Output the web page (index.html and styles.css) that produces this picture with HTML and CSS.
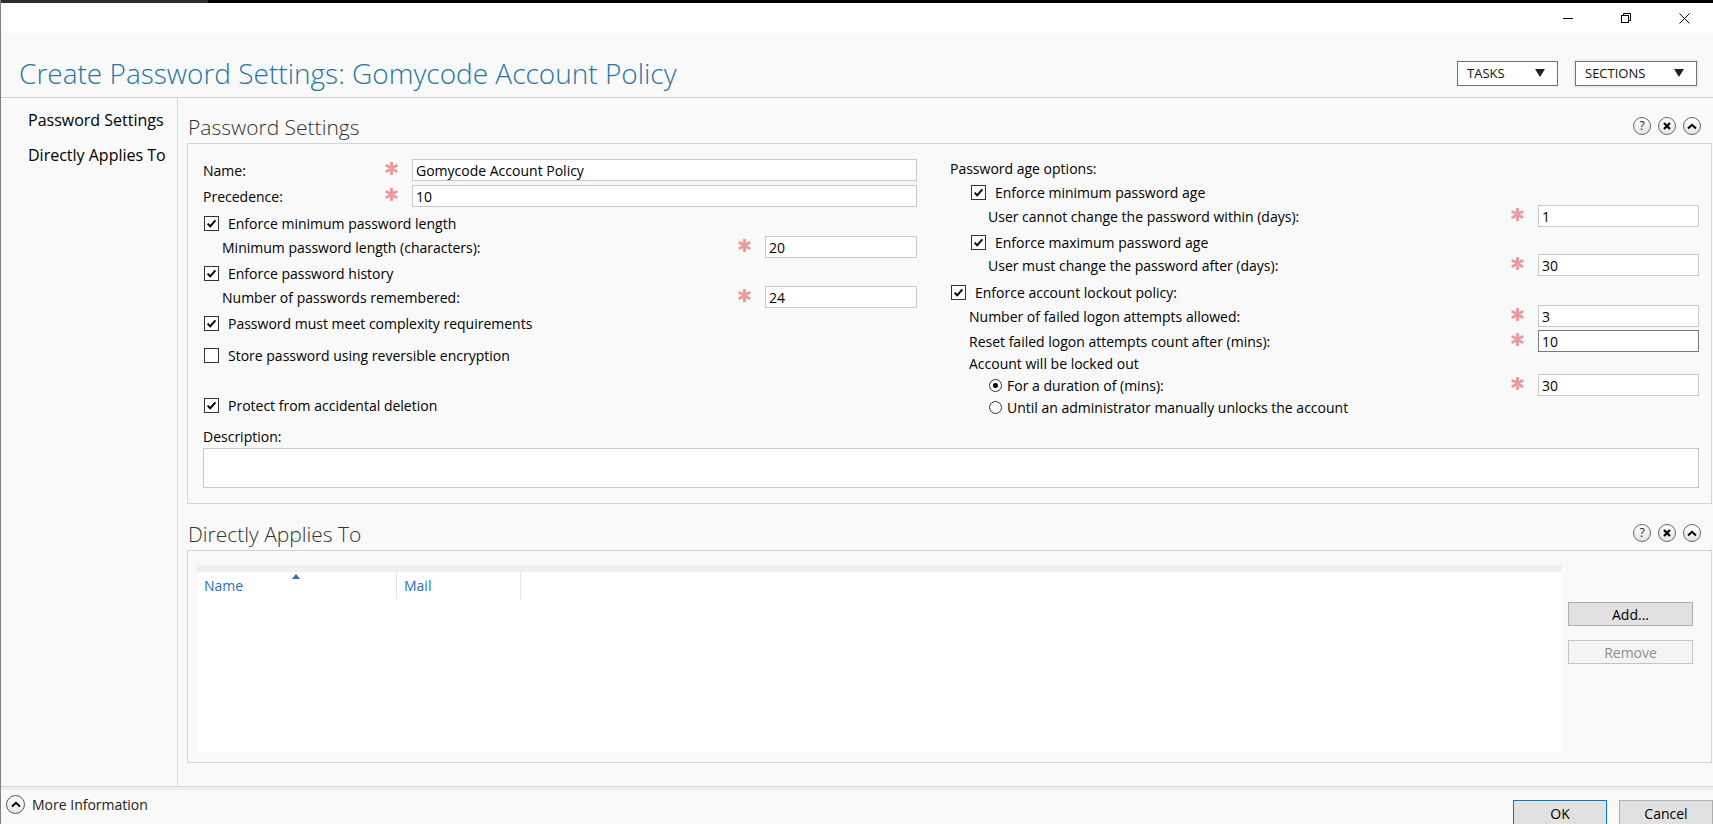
FILE: index.html
```html
<!DOCTYPE html>
<html>
<head>
<meta charset="utf-8">
<title>Create Password Settings</title>
<link rel="stylesheet" href="styles.css">
</head>
<body>
<div class="window">
  <div class="topstrip"><div class="topstrip-left"></div></div>
  <div class="titlebar">
    <div class="winbtn"><svg width="10" height="10" viewBox="0 0 10 10"><path d="M0 5.5H10" stroke="#000" stroke-width="1"/></svg></div>
    <div class="winbtn"><svg width="10" height="10" viewBox="0 0 10 10"><path d="M2.5 2.5V0.5H9.5V7.5H7.5" fill="none" stroke="#000"/><rect x="0.5" y="2.5" width="7" height="7" fill="none" stroke="#000"/></svg></div>
    <div class="winbtn"><svg width="11" height="11" viewBox="0 0 11 11"><path d="M0.5 0.5L10.5 10.5M10.5 0.5L0.5 10.5" stroke="#000" stroke-width="1"/></svg></div>
  </div>

  <header class="header">
    <h1 class="page-title">Create Password Settings: Gomycode Account Policy</h1>
    <div class="header-actions">
      <div class="dd dd-tasks"><span>TASKS</span><svg width="10" height="8" viewBox="0 0 10 8"><path d="M0 0H10L5 8Z" fill="#222"/></svg></div>
      <div class="dd dd-sections"><span>SECTIONS</span><svg width="10" height="8" viewBox="0 0 10 8"><path d="M0 0H10L5 8Z" fill="#222"/></svg></div>
    </div>
  </header>

  <div class="main">
    <nav class="nav">
      <div class="nav-item">Password Settings</div>
      <div class="nav-item">Directly Applies To</div>
    </nav>

    <div class="content">
      <section class="sect">
        <div class="sect-head">
          <h2>Password Settings</h2>
          <div class="sect-icons">
            <span class="ci"><span class="ci-q">?</span></span>
            <span class="ci"><svg width="8" height="8" viewBox="0 0 8 8"><path d="M1 1L7 7M7 1L1 7" stroke="#000" stroke-width="2.2"/></svg></span>
            <span class="ci"><svg width="10" height="7" viewBox="0 0 10 7"><path d="M1 5.5L5 1.8L9 5.5" fill="none" stroke="#000" stroke-width="2"/></svg></span>
          </div>
        </div>
        <div class="sect-box ps-box">
          <div class="cols">
            <div class="col-left">
              <div class="frow">
                <span class="lbl">Name:</span>
                <svg class="ast" width="13" height="13" viewBox="0 0 12 12"><path d="M6 1V11M1.7 3.5L10.3 8.5M1.7 8.5L10.3 3.5" stroke="#e89c9c" stroke-width="2.8" stroke-linecap="round"/></svg>
                <input class="inp inp-long" value="Gomycode Account Policy">
              </div>
              <div class="frow mt2">
                <span class="lbl">Precedence:</span>
                <svg class="ast" width="13" height="13" viewBox="0 0 12 12"><path d="M6 1V11M1.7 3.5L10.3 8.5M1.7 8.5L10.3 3.5" stroke="#e89c9c" stroke-width="2.8" stroke-linecap="round"/></svg>
                <input class="inp inp-long" value="10">
              </div>
              <div class="frow mt3">
                <span class="cb"><svg width="13" height="13" viewBox="0 0 13 13"><path d="M2.6 6.6L5.2 9.3L10.4 3.4" fill="none" stroke="#000" stroke-width="2"/></svg></span>
                <span class="cbl">Enforce minimum password length</span>
              </div>
              <div class="frow">
                <span class="lbl sub">Minimum password length (characters):</span>
                <svg class="ast" width="13" height="13" viewBox="0 0 12 12"><path d="M6 1V11M1.7 3.5L10.3 8.5M1.7 8.5L10.3 3.5" stroke="#e89c9c" stroke-width="2.8" stroke-linecap="round"/></svg>
                <input class="inp inp-short" value="20">
              </div>
              <div class="frow mt2">
                <span class="cb"><svg width="13" height="13" viewBox="0 0 13 13"><path d="M2.6 6.6L5.2 9.3L10.4 3.4" fill="none" stroke="#000" stroke-width="2"/></svg></span>
                <span class="cbl">Enforce password history</span>
              </div>
              <div class="frow">
                <span class="lbl sub">Number of passwords remembered:</span>
                <svg class="ast" width="13" height="13" viewBox="0 0 12 12"><path d="M6 1V11M1.7 3.5L10.3 8.5M1.7 8.5L10.3 3.5" stroke="#e89c9c" stroke-width="2.8" stroke-linecap="round"/></svg>
                <input class="inp inp-short" value="24">
              </div>
              <div class="frow mt2">
                <span class="cb"><svg width="13" height="13" viewBox="0 0 13 13"><path d="M2.6 6.6L5.2 9.3L10.4 3.4" fill="none" stroke="#000" stroke-width="2"/></svg></span>
                <span class="cbl">Password must meet complexity requirements</span>
              </div>
              <div class="frow mt8">
                <span class="cb"></span>
                <span class="cbl">Store password using reversible encryption</span>
              </div>
              <div class="frow mt26">
                <span class="cb"><svg width="13" height="13" viewBox="0 0 13 13"><path d="M2.6 6.6L5.2 9.3L10.4 3.4" fill="none" stroke="#000" stroke-width="2"/></svg></span>
                <span class="cbl">Protect from accidental deletion</span>
              </div>
            </div>

            <div class="col-right">
              <div class="frow"><span class="lbl">Password age options:</span></div>
              <div class="frow ind1">
                <span class="cb"><svg width="13" height="13" viewBox="0 0 13 13"><path d="M2.6 6.6L5.2 9.3L10.4 3.4" fill="none" stroke="#000" stroke-width="2"/></svg></span>
                <span class="cbl">Enforce minimum password age</span>
              </div>
              <div class="frow">
                <span class="lbl ind2">User cannot change the password within (days):</span>
                <svg class="ast" width="13" height="13" viewBox="0 0 12 12"><path d="M6 1V11M1.7 3.5L10.3 8.5M1.7 8.5L10.3 3.5" stroke="#e89c9c" stroke-width="2.8" stroke-linecap="round"/></svg>
                <input class="inp inp-right" value="1">
              </div>
              <div class="frow mt2 ind1">
                <span class="cb"><svg width="13" height="13" viewBox="0 0 13 13"><path d="M2.6 6.6L5.2 9.3L10.4 3.4" fill="none" stroke="#000" stroke-width="2"/></svg></span>
                <span class="cbl">Enforce maximum password age</span>
              </div>
              <div class="frow h22">
                <span class="lbl ind2">User must change the password after (days):</span>
                <svg class="ast" width="13" height="13" viewBox="0 0 12 12"><path d="M6 1V11M1.7 3.5L10.3 8.5M1.7 8.5L10.3 3.5" stroke="#e89c9c" stroke-width="2.8" stroke-linecap="round"/></svg>
                <input class="inp inp-right" value="30">
              </div>
              <div class="frow mt4">
                <span class="cb"><svg width="13" height="13" viewBox="0 0 13 13"><path d="M2.6 6.6L5.2 9.3L10.4 3.4" fill="none" stroke="#000" stroke-width="2"/></svg></span>
                <span class="cbl">Enforce account lockout policy:</span>
              </div>
              <div class="frow">
                <span class="lbl sub">Number of failed logon attempts allowed:</span>
                <svg class="ast" width="13" height="13" viewBox="0 0 12 12"><path d="M6 1V11M1.7 3.5L10.3 8.5M1.7 8.5L10.3 3.5" stroke="#e89c9c" stroke-width="2.8" stroke-linecap="round"/></svg>
                <input class="inp inp-right" value="3">
              </div>
              <div class="frow mt1">
                <span class="lbl sub">Reset failed logon attempts count after (mins):</span>
                <svg class="ast" width="13" height="13" viewBox="0 0 12 12"><path d="M6 1V11M1.7 3.5L10.3 8.5M1.7 8.5L10.3 3.5" stroke="#e89c9c" stroke-width="2.8" stroke-linecap="round"/></svg>
                <input class="inp inp-right inp-focus" value="10">
              </div>
              <div class="frow h20"><span class="lbl sub">Account will be locked out</span></div>
              <div class="frow h22 mt1 ind3">
                <span class="rb rb-on"></span>
                <span class="rbl">For a duration of (mins):</span>
                <svg class="ast" width="13" height="13" viewBox="0 0 12 12"><path d="M6 1V11M1.7 3.5L10.3 8.5M1.7 8.5L10.3 3.5" stroke="#e89c9c" stroke-width="2.8" stroke-linecap="round"/></svg>
                <input class="inp inp-right" value="30">
              </div>
              <div class="frow h22 ind3">
                <span class="rb"></span>
                <span class="rbl">Until an administrator manually unlocks the account</span>
              </div>
            </div>
          </div>
          <div class="desc-label">Description:</div>
          <div class="desc-box"></div>
        </div>
      </section>

      <section class="sect sect2">
        <div class="sect-head">
          <h2>Directly Applies To</h2>
          <div class="sect-icons">
            <span class="ci"><span class="ci-q">?</span></span>
            <span class="ci"><svg width="8" height="8" viewBox="0 0 8 8"><path d="M1 1L7 7M7 1L1 7" stroke="#000" stroke-width="2.2"/></svg></span>
            <span class="ci"><svg width="10" height="7" viewBox="0 0 10 7"><path d="M1 5.5L5 1.8L9 5.5" fill="none" stroke="#000" stroke-width="2"/></svg></span>
          </div>
        </div>
        <div class="sect-box dat-box">
          <div class="grid">
            <div class="grid-band"></div>
            <div class="grid-head">
              <div class="gh gh-name">Name<svg class="sort" width="8" height="5" viewBox="0 0 8 5"><path d="M0 5L4 0L8 5Z" fill="#2a6fbd"/></svg></div>
              <div class="gh gh-mail">Mail</div>
            </div>
            <div class="grid-body"></div>
          </div>
          <div class="grid-btns">
            <div class="btn">Add...</div>
            <div class="btn btn-dis">Remove</div>
          </div>
        </div>
      </section>
    </div>
  </div>

  <footer class="footer">
    <div class="more">
      <span class="more-ic"><svg width="10" height="7" viewBox="0 0 10 7"><path d="M1 5.5L5 1.8L9 5.5" fill="none" stroke="#000" stroke-width="2"/></svg></span>
      <span class="more-t">More Information</span>
    </div>
    <div class="foot-btns">
      <div class="btn fbtn fbtn-ok">OK</div>
      <div class="btn fbtn">Cancel</div>
    </div>
  </footer>
</div>
</body>
</html>
```

FILE: styles.css
```css
* { box-sizing: border-box; margin: 0; padding: 0; }
html, body { width: 1713px; height: 824px; overflow: hidden; }
body {
  background: #f9f9f9;
  font-family: "Open Sans", "Noto Sans", sans-serif;
  font-size: 14px;
  color: #000;
}
.window {
  width: 1713px;
  height: 824px;
  border-left: 1px solid #7f7f7f;
  display: flex;
  flex-direction: column;
  overflow: hidden;
  background: #f9f9f9;
}
.topstrip { height: 3px; background: #000; flex: none; display: flex; }
.topstrip-left { width: 207px; background: #2e2e2e; }
.titlebar { height: 30px; background: #fff; display: flex; justify-content: flex-end; flex: none; }
.winbtn { width: 58px; display: flex; align-items: center; justify-content: center; }

.header {
  height: 65px;
  flex: none;
  padding: 16px 16px 0 18px;
  display: flex;
  align-items: center;
  border-bottom: 1px solid #d4d4d4;
}
.page-title {
  flex: 1;
  font-weight: 300;
  font-size: 28px;
  line-height: 1;
  color: #2676a4;
}
.header-actions { display: flex; gap: 17px; }
.dd {
  height: 25px;
  border: 1px solid #707070;
  background: #fff;
  display: flex;
  align-items: center;
  justify-content: space-between;
  padding: 0 12px 0 9px;
  font-size: 13px;
  color: #111;
}
.dd-tasks { width: 101px; }
.dd-sections { width: 122px; box-shadow: 0 0 0 2px #e9eff8; }

.main { height: 688px; flex: none; display: flex; }
.nav {
  width: 177px;
  flex: none;
  border-right: 1px solid #d6d6d6;
  padding: 12px 0 0 27px;
  font-size: 16px;
}
.nav-item { line-height: 21px; margin-bottom: 14px; }

.content { flex: 1; padding: 0 1px 0 9px; }
.sect-head {
  height: 45px;
  display: flex;
  align-items: flex-end;
  padding: 0 11px 0 1px;
}
.sect-head h2 {
  flex: 1;
  font-weight: 300;
  font-size: 21px;
  line-height: 30px;
  color: #333;
  margin-bottom: 1px;
}
.sect-icons { display: flex; gap: 7px; margin-bottom: 8px; }
.ci {
  width: 18px;
  height: 18px;
  border: 1px solid #666;
  border-radius: 50%;
  background: linear-gradient(#ffffff, #e4e4e4);
  display: flex;
  align-items: center;
  justify-content: center;
}
.ci-q { font-size: 12px; line-height: 1; color: #222; }
.sect2 { margin-top: 1px; }

.sect-box { border: 1px solid #d4d4d4; }
.ps-box { padding: 14px 12px 15px 15px; }
.cols { display: flex; gap: 33px; }
.col-left { width: 714px; }
.col-right { width: 749px; margin-top: -2px; }

.frow { height: 24px; display: flex; align-items: center; }
.h22 { height: 22px; }
.h20 { height: 20px; }
.mt1 { margin-top: 1px; }
.mt2 { margin-top: 2px; }
.mt3 { margin-top: 3px; }
.mt4 { margin-top: 4px; }
.mt8 { margin-top: 8px; }
.mt26 { margin-top: 26px; }

.lbl { flex: 1; white-space: nowrap; }
.sub { padding-left: 19px; }
.ind1 { padding-left: 20px; }
.ind2 { padding-left: 38px; }
.ind3 { padding-left: 39px; }

.ast { flex: none; margin: 0 14px 3px 0; }
.inp {
  height: 22px;
  border: 1px solid #c8c8c8;
  background: #fff;
  font-family: "Open Sans", "Noto Sans", sans-serif;
  font-size: 14px;
  color: #000;
  padding: 0 3px;
  outline: none;
}
.inp-long { width: 505px; }
.inp-short { width: 152px; }
.inp-right { width: 161px; }
.inp-focus { border-color: #7a7a7a; }

.cb {
  width: 15px;
  height: 15px;
  flex: none;
  margin-left: 1px;
  border: 1px solid #333;
  background: #fff;
  display: flex;
  align-items: center;
  justify-content: center;
}
.cbl { margin-left: 9px; white-space: nowrap; }
.rb {
  width: 13px;
  height: 13px;
  flex: none;
  border: 1px solid #333;
  border-radius: 50%;
  background: #fff;
  display: flex;
  align-items: center;
  justify-content: center;
}
.rb-on::after {
  content: "";
  width: 5px;
  height: 5px;
  border-radius: 50%;
  background: #000;
}
.rbl { margin-left: 5px; flex: 1; white-space: nowrap; }

.desc-label { margin-top: 9px; height: 20px; line-height: 20px; }
.desc-box { margin-top: 1px; height: 40px; border: 1px solid #c8c8c8; background: #fff; }

.dat-box {
  height: 213px;
  padding: 14px 18px 10px 9px;
  display: flex;
  gap: 6px;
}
.grid { flex: 1; background: #fff; display: flex; flex-direction: column; }
.grid-band { height: 7px; background: #efefef; }
.grid-head { height: 27px; display: flex; }
.gh {
  display: flex;
  align-items: center;
  padding-left: 7px;
  color: #1f6fc4;
  border-right: 1px solid #e4e4e4;
}
.gh-name { width: 200px; position: relative; }
.gh-mail { width: 124px; }
.sort { position: absolute; left: 95px; top: 2px; }
.grid-body { flex: 1; }

.grid-btns {
  width: 125px;
  flex: none;
  padding-top: 37px;
  display: flex;
  flex-direction: column;
  gap: 14px;
}
.btn {
  height: 24px;
  border: 1px solid #adadad;
  background: #e1e1e1;
  display: flex;
  align-items: center;
  justify-content: center;
  color: #000;
}
.btn-dis { background: #f4f4f4; border-color: #c4c4c4; color: #8d8d8d; }

.footer {
  flex: 1;
  border-top: 1px solid #d4d4d4;
  box-shadow: inset 0 3px 0 #efefef;
  display: flex;
  justify-content: space-between;
  align-items: flex-start;
  padding-left: 5px;
}
.more { display: flex; align-items: center; margin-top: 8px; }
.more-ic {
  width: 19px;
  height: 19px;
  border: 1px solid #555;
  border-radius: 50%;
  background: linear-gradient(#ffffff, #e8e8e8);
  display: flex;
  align-items: center;
  justify-content: center;
}
.more-t { margin-left: 7px; color: #222; }
.foot-btns { display: flex; gap: 12px; margin-top: 13px; }
.fbtn { width: 94px; height: 26px; }
.fbtn-ok { border-color: #0078d7; }
```
